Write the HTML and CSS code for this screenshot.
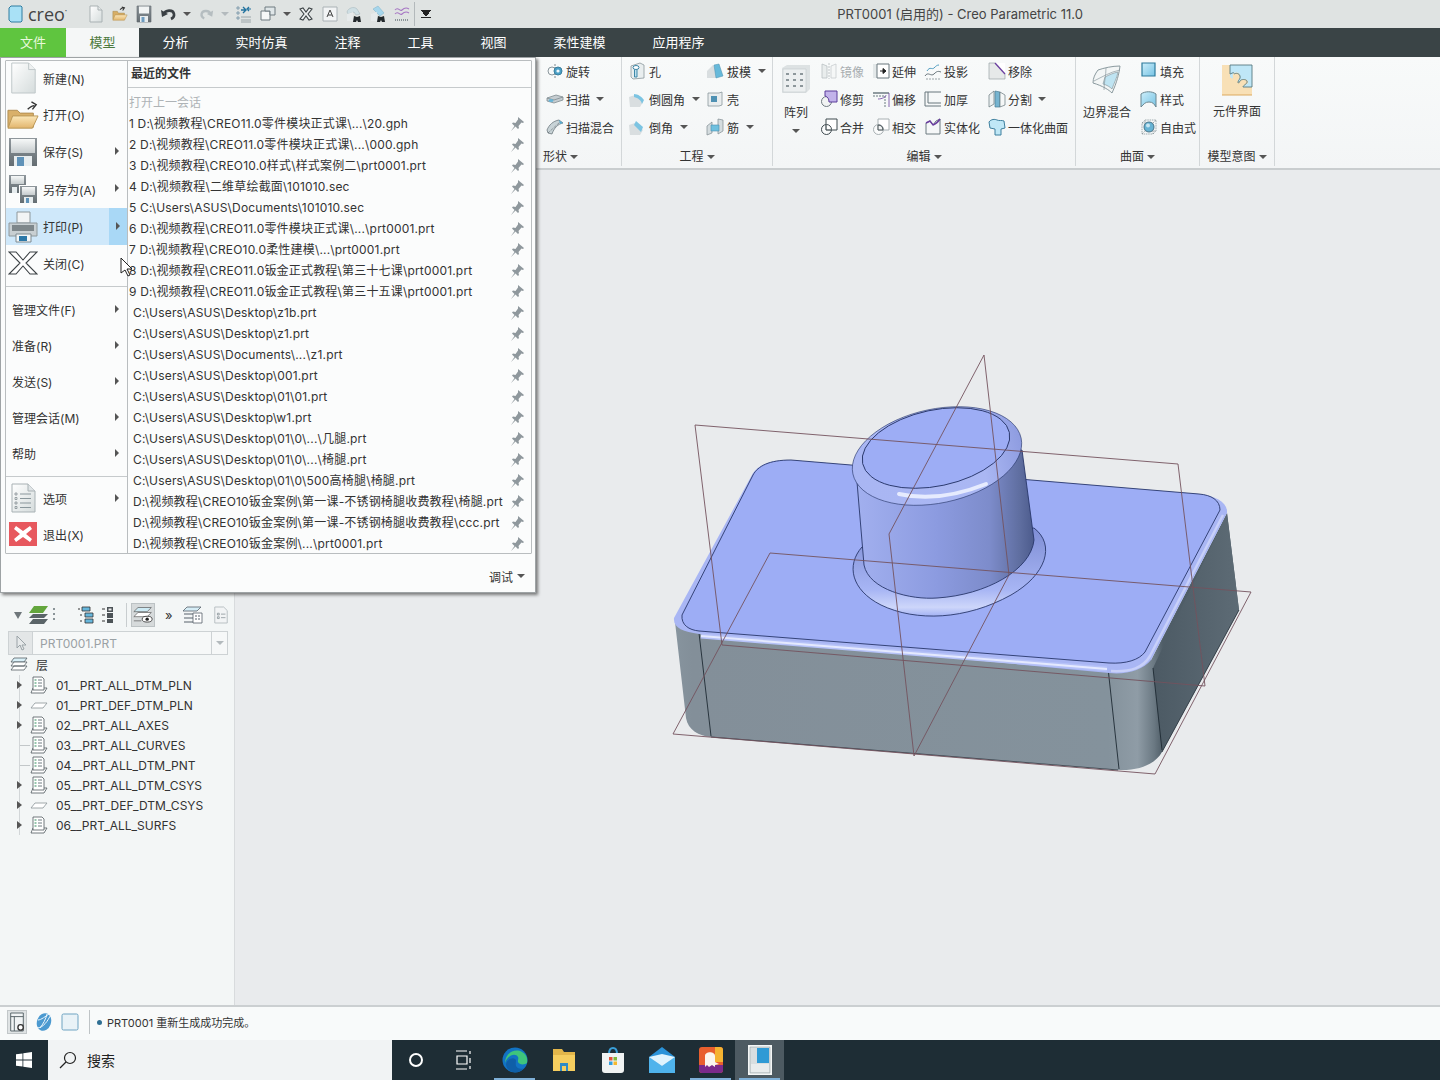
FILE: index.html
```html
<!DOCTYPE html>
<html lang="zh-CN">
<head>
<meta charset="utf-8">
<title>PRT0001 - Creo Parametric 11.0</title>
<link rel="stylesheet" href="styles.css">
</head>
<body>
<svg class="defs" aria-hidden="true">
  <defs>
    <linearGradient id="g-page" x1="0" y1="0" x2="1" y2="1"><stop offset="0" stop-color="#fff"/><stop offset="1" stop-color="#d5dcdc"/></linearGradient>
    <linearGradient id="g-folder" x1="0" y1="0" x2="0" y2="1"><stop offset="0" stop-color="#fbe7b8"/><stop offset="1" stop-color="#e2b56d"/></linearGradient>
    <linearGradient id="g-disk" x1="0" y1="0" x2="0" y2="1"><stop offset="0" stop-color="#8f979c"/><stop offset="1" stop-color="#646d72"/></linearGradient>
    <linearGradient id="g-blue" x1="0" y1="0" x2="1" y2="1"><stop offset="0" stop-color="#cdeefa"/><stop offset="1" stop-color="#76c3e4"/></linearGradient>
    <linearGradient id="g-front" x1="0" y1="0" x2="1" y2="0"><stop offset="0" stop-color="#87949e"/><stop offset=".03" stop-color="#838f99"/><stop offset=".768" stop-color="#84929c"/><stop offset=".82" stop-color="#8f9ca6"/><stop offset=".85" stop-color="#6a7882"/><stop offset=".865" stop-color="#4f5d67"/><stop offset="1" stop-color="#505e68"/></linearGradient>
    <linearGradient id="g-side" x1="0" y1="0" x2="1" y2="0"><stop offset="0" stop-color="#4c5a64"/><stop offset="1" stop-color="#5d6b75"/></linearGradient>
    <linearGradient id="g-cyl" x1="0" y1="0" x2="1" y2="0"><stop offset="0" stop-color="#a2b0ef"/><stop offset=".45" stop-color="#8c9be0"/><stop offset=".75" stop-color="#7d8ccb"/><stop offset=".92" stop-color="#5f6ea0"/><stop offset="1" stop-color="#4c5b8c"/></linearGradient>
    <linearGradient id="g-cap" x1="0" y1="0" x2="1" y2="0"><stop offset="0" stop-color="#a9b6f3"/><stop offset=".75" stop-color="#aab7f3"/><stop offset="1" stop-color="#8e9ce0"/></linearGradient>
    <linearGradient id="g-base" x1="0" y1="0" x2="0" y2="1"><stop offset="0" stop-color="#7e8dd4"/><stop offset=".7" stop-color="#a7b5f4"/><stop offset=".9" stop-color="#cdd6fa"/><stop offset="1" stop-color="#a3b2f4"/></linearGradient>
    <linearGradient id="g-panel" x1="0" y1="0" x2="0" y2="1"><stop offset="0" stop-color="#f6f8f8"/><stop offset="1" stop-color="#c6ccce"/></linearGradient>

    <symbol id="i-new" viewBox="0 0 16 18"><path d="M2 1h8l4 4v12H2z" fill="url(#g-page)" stroke="#a9b1b3"/><path d="M10 1v4h4" fill="#e6eaea" stroke="#a9b1b3"/></symbol>
    <symbol id="i-open" viewBox="0 0 18 18"><path d="M1 6h5l1 2h7v7H1z" fill="#d7ae66" stroke="#a98b52" stroke-width=".6"/><path d="M3.500 10H17l-3 6H1z" fill="url(#g-folder)" stroke="#b99655" stroke-width=".6"/><path d="M9 4c2-2 3-2 4-2M11 1l3 1-2 3" fill="none" stroke="#333" stroke-width="1.200"/></symbol>
    <symbol id="i-save" viewBox="0 0 16 18"><path d="M1 1h14v16H1z" fill="url(#g-disk)" stroke="#5e676c" stroke-width=".6"/><path d="M3 1.500h10v7H3z" fill="#f1f4f4"/><path d="M4 11h8v6H4z" fill="#e8edef"/><path d="M5.500 12h3v5h-3z" fill="#6d9cc0"/></symbol>
    <symbol id="i-undo" viewBox="0 0 18 16"><path d="M4 8c1-4 9-5 10 0 .6 3-1 4-3 5" fill="none" stroke="#3a4044" stroke-width="2.600"/><path d="M1 4l1 7 6-3z" fill="#3a4044"/></symbol>
    <symbol id="i-redo" viewBox="0 0 18 16"><path d="M14 8c-1-4-9-5-10 0-.6 3 1 4 3 5" fill="none" stroke="#b5bdc0" stroke-width="2.600"/><path d="M17 4l-1 7-6-3z" fill="#b5bdc0"/></symbol>
    <symbol id="i-regen" viewBox="0 0 16 18"><path d="M1 2h2v2H1zM1 7h2v2H1zM1 12h2v2H1z" fill="none" stroke="#6f8fa5" stroke-width=".8"/><path d="M5 15h10M5 17h10M5 12h10" stroke="#8c979c" stroke-width=".8"/><path d="M5 5h5M7 2l3 3-3 3" fill="none" stroke="#23739f" stroke-width="1.400"/><path d="M15 4h-3M13 2l-2 2 2 2" fill="none" stroke="#23739f" stroke-width="1.200"/></symbol>
    <symbol id="i-win" viewBox="0 0 16 16"><path d="M1 5h9v9H1z" fill="#f6f8f8" stroke="#6f7b80"/><path d="M5 1h10v8h-5V5H5z" fill="#dfe6e8" stroke="#6f7b80"/></symbol>
    <symbol id="i-x" viewBox="0 0 16 16"><path d="M2 3l3-1 3 4 3-4 3 1-4 5 4 5-3 1-3-4-3 4-3-1 4-5z" fill="#eef1f1" stroke="#3c4346" stroke-width="1.100"/></symbol>
    <symbol id="i-a" viewBox="0 0 16 16"><path d="M1 1h14v14H1z" fill="#f2f4f5" stroke="#aab2b6"/><path d="M5 11l3-7 3 7M6 9h4" fill="none" stroke="#444" stroke-width="1"/></symbol>
    <symbol id="i-tool1" viewBox="0 0 16 18"><path d="M1 7C2 3 8 1 11 4l3 5-4 1-2-3-6 2z" fill="#cfdfe4" stroke="#9fb0b6" stroke-width=".5"/><path d="M1 9l6-2v9H1z" fill="#e6eaeb"/><path d="M8 11l3 1 3-1 1 6h-3l-1-2-1 2H7z" fill="#22282b"/></symbol>
    <symbol id="i-tool2" viewBox="0 0 16 18"><path d="M3 4l5-3 6 7-4 3z" fill="#a6d6ec" stroke="#7fb3c9" stroke-width=".5"/><path d="M1 9l6-2v9H1z" fill="#e6eaeb"/><path d="M8 11l3 1 3-1 1 6h-3l-1-2-1 2H7z" fill="#22282b"/></symbol>
    <symbol id="i-wave" viewBox="0 0 16 18"><path d="M1 5c3-4 5 2 7 0s4-3 7-1M1 9c3-4 5 2 7 0s4-3 7-1" fill="none" stroke="#a777c4" stroke-width="1.100"/><path d="M1 15h14" stroke="#8a9498" stroke-dasharray="1 1" stroke-width="2"/></symbol>

    <symbol id="r-revolve" viewBox="0 0 18 16"><path d="M9 1v14" stroke="#7e8a90" stroke-dasharray="2 1"/><ellipse cx="6" cy="8" rx="4" ry="4" fill="none" stroke="#8b979d"/><ellipse cx="12" cy="8" rx="4" ry="4" fill="#4a9fc6" stroke="#3b7f9e"/><circle cx="12" cy="8" r="1.600" fill="#eef7fb"/></symbol>
    <symbol id="r-sweep" viewBox="0 0 18 16"><path d="M1 7l9-3 7 2v3l-9 3-7-2z" fill="#c5ccd0" stroke="#7f8b90" stroke-width=".8"/><path d="M1 7l7 2 9-3" fill="none" stroke="#7f8b90" stroke-width=".8"/><ellipse cx="5" cy="9.500" rx="2.500" ry="1.500" fill="#68b4d6"/></symbol>
    <symbol id="r-sweepb" viewBox="0 0 18 16"><path d="M1 11C3 6 7 2 13 1l4 3c-5 1-9 5-11 11l-4-1z" fill="#c8d3d7" stroke="#6d797f" stroke-width=".8"/><path d="M13 1l4 3-3 1z" fill="#58acd0"/><path d="M2 14L14 3" stroke="#4a5257" stroke-dasharray="1 1" stroke-width=".7"/></symbol>
    <symbol id="r-hole" viewBox="0 0 18 18"><path d="M3 4l9-3 4 2v13l-11 1-2-2z" fill="#e9eeef" stroke="#8a979c" stroke-width=".8"/><path d="M6.500 6v9h2.500V5z" fill="#bfe0ee" stroke="#3c87a8"/><ellipse cx="8" cy="5.500" rx="3" ry="2" fill="#fff" stroke="#3c87a8"/></symbol>
    <symbol id="r-draft" viewBox="0 0 18 16"><path d="M1 15V8l6-6 3 3v10z" fill="#d9dee0"/><path d="M8 2l5-1 4 12-7 2z" fill="#66b9da" stroke="#4a8fae" stroke-width=".5"/></symbol>
    <symbol id="r-round" viewBox="0 0 18 18"><path d="M1 7l6-2c4 0 7 3 8 7l-3 5H2z" fill="#d9dee0"/><path d="M6 4c4 0 8 3 10 6l-2 4c-1-4-4-6-8-7z" fill="#7cc4e2"/></symbol>
    <symbol id="r-shell" viewBox="0 0 18 18"><path d="M2 3h11l3-1v13l-3 1H2z" fill="#e9edee" stroke="#8a979c" stroke-width=".8"/><path d="M5 6h6v6H5z" fill="#4f91b3"/></symbol>
    <symbol id="r-chamfer" viewBox="0 0 18 18"><path d="M1 7l6-2 8 7-3 5H2z" fill="#d9dee0"/><path d="M8 3l7 6-2 5-7-7z" fill="#7cc4e2"/></symbol>
    <symbol id="r-rib" viewBox="0 0 18 18"><path d="M1 8l5-4v11l-5 2z" fill="#d4dcdf" stroke="#7f8b90" stroke-width=".7"/><path d="M12 1l5 1v11l-5 3z" fill="#d4dcdf" stroke="#7f8b90" stroke-width=".7"/><path d="M5 7h8v6H5z" fill="#6fc0df" stroke="#4a8fae" stroke-width=".6"/></symbol>
    <symbol id="r-pattern" viewBox="0 0 30 30"><path d="M1 4l5-3h23v24l-4 4H1z" fill="#dde2e3"/><path d="M2 5h23v23H2z" fill="#eceff0" stroke="#c4cacc" stroke-width=".6"/><path d="M5 9h3v2H5zM12 9h3v2h-3zM19 9h3v2h-3zM5 15h3v2H5zM12 15h3v2h-3zM19 15h3v2h-3zM5 21h3v2H5zM12 21h3v2h-3zM19 21h3v2h-3z" fill="#8d979b"/></symbol>
    <symbol id="r-mirror" viewBox="0 0 18 18"><path d="M2 2l5 2v12H2z" fill="#e9eded" stroke="#b9c0c3" stroke-width=".8"/><path d="M16 2l-5 2v12h5z" fill="#f5f7f7" stroke="#c8cdcf" stroke-width=".8"/><path d="M9 1v16" stroke="#c0c6c8" stroke-dasharray="2 1"/></symbol>
    <symbol id="r-extend" viewBox="0 0 18 16"><path d="M1 1h4v14H1z" fill="#e3e8e9"/><path d="M5 1h12v14H5z" fill="#fff" stroke="#68767c"/><path d="M8 8h5M11 5.500l3 2.500-3 2.500z" stroke="#222" fill="#222"/></symbol>
    <symbol id="r-project" viewBox="0 0 18 18"><path d="M1 14c3-5 6 1 9-2s4-3 7-2" fill="none" stroke="#69757b"/><path d="M3 9c3-5 5-1 7-3s3-3 5-3" fill="none" stroke="#4e9cc0"/><path d="M2 17h14" stroke="#9aa4a8" stroke-dasharray="2 1"/></symbol>
    <symbol id="r-remove" viewBox="0 0 18 18"><path d="M1 1h6l10 11v5H1z" fill="#e6e9e9" stroke="#9aa3a7" stroke-width=".7"/><path d="M7 1h10v11z" fill="#fff"/><path d="M7 1l10 11" stroke="#6b3fa0" stroke-width="1.300"/></symbol>
    <symbol id="r-trim" viewBox="0 0 18 18"><circle cx="6.500" cy="11.500" r="5" fill="#f1f3f3" stroke="#6f7a80"/><path d="M5 1h12v11H9c0-3-1-5-4-6z" fill="#c2b3ea" stroke="#5b3d9a"/></symbol>
    <symbol id="r-offset" viewBox="0 0 18 18"><path d="M1 3h16" stroke="#8f9a9f" stroke-width="2"/><path d="M1 6h12v11" fill="none" stroke="#6b7a80" stroke-dasharray="2 1"/><path d="M6 9c4 0 8-2 8-4M17 3v14" fill="none" stroke="#6b3fa0" stroke-width=".8"/></symbol>
    <symbol id="r-thick" viewBox="0 0 18 16"><path d="M1 1h16M1 1v14h16M4 1v11h13" fill="none" stroke="#69767c"/></symbol>
    <symbol id="r-split" viewBox="0 0 18 18"><path d="M1 5l5-4v13l-5 3z" fill="#edf1f2" stroke="#65757b" stroke-width=".7"/><path d="M7 1l5 1v15H7z" fill="#76b4d0" stroke="#4b7d94" stroke-width=".7"/><path d="M12 2l5 3v10l-5 2z" fill="#f5f7f7" stroke="#65757b" stroke-width=".7"/></symbol>
    <symbol id="r-merge" viewBox="0 0 18 18"><path d="M6 1h11v11H6z" fill="#fff" stroke="#3f4a4f"/><circle cx="6.500" cy="11.500" r="5" fill="#fff" fill-opacity=".5" stroke="#3f4a4f"/><path d="M6 7v5h5" fill="none" stroke="#3f4a4f"/></symbol>
    <symbol id="r-intersect" viewBox="0 0 18 18"><path d="M6 1h11v11H6z" fill="#fff" stroke="#a8b0b3"/><circle cx="6.500" cy="11.500" r="5" fill="#fff" fill-opacity=".5" stroke="#a8b0b3"/><path d="M6 7c3 0 5 2 5 5H6z" fill="#f3f5f5" stroke="#3f4a4f"/></symbol>
    <symbol id="r-solidify" viewBox="0 0 18 18"><path d="M2 5l4-2 3 4 3-4 4-2v15H2z" fill="#f5f7f8" stroke="#6c7a80"/><path d="M2 5l4-2 3 4c3-1 5-3 7-6" fill="none" stroke="#6b3fa0" stroke-width="1.400"/></symbol>
    <symbol id="r-unify" viewBox="0 0 18 18"><path d="M1 4c2-3 6-3 8-2s5 0 7 1l1 7-4 1v6H7v-6l-5-1z" fill="#bfe7f6" stroke="#3d7f9e"/></symbol>
    <symbol id="r-bound" viewBox="0 0 32 32"><path d="M8 6c6-2 14-4 22-4-1 8-3 16-8 27-3-3-9-7-19-10 0-5 2-9 5-13z" fill="#f3f6f6" stroke="#8b9a9f"/><path d="M15 13c4-2 8-4 13-5-1 6-4 11-6 17-2-2-5-4-9-5z" fill="#bfe4f2" stroke="#8b9a9f" stroke-width=".7"/><path d="M4 17c8-4 16-9 26-11M16 4c0 8-2 14-2 22" fill="none" stroke="#8b9a9f" stroke-width=".7"/></symbol>
    <symbol id="r-fill" viewBox="0 0 18 18"><path d="M2 1h13v13H2z" fill="url(#g-blue)" stroke="#2e7b9c" stroke-width="1.200"/></symbol>
    <symbol id="r-style" viewBox="0 0 18 18"><path d="M1 4C5 1 12 1 16 4v13c-2-3-3-5-7-5s-5 2-8 5z" fill="url(#g-blue)" stroke="#6b8690"/></symbol>
    <symbol id="r-free" viewBox="0 0 18 18"><path d="M2 5h11v11H2zM5 2h11v11H5zM2 5l3-3M13 5l3-3M2 16l3-3M13 16l3-3" fill="none" stroke="#7d8a8f" stroke-width=".7" stroke-dasharray="1.500 .8"/><circle cx="9" cy="9" r="5" fill="#67b3d4" stroke="#47758a"/><circle cx="8" cy="7.500" r="2" fill="#c7e6f2"/></symbol>
    <symbol id="r-puzzle" viewBox="0 0 32 32"><path d="M1 1h30v30H1z" fill="#f8e0b6"/><path d="M9 1h22v22H22c1-3 5-2 5-5s-5-4-7-2-3 3-3 1 3-3 2-6-4-3-6-2-1 4-1 5-3 0-3-2z" fill="#bfe7f7"/><path d="M9 1v9c1 0 3-2 4-1M9 1h22v22h-9c0-2 5-3 4-6-1-2-6-2-7 0s-2 3-2 1 3-3 2-6-4-3-6-2" fill="none" stroke="#57797f" stroke-width=".9"/><path d="M1 31h30" stroke="#dca95f"/></symbol>

    <symbol id="m-new" viewBox="0 0 32 34"><path d="M4 1h18l7 7v25H4z" fill="url(#g-page)" stroke="#bcc4c6"/><path d="M22 1v7h7" fill="#eef1f1" stroke="#bcc4c6"/></symbol>
    <symbol id="m-open" viewBox="0 0 34 30"><path d="M1 10h10l3 3h14v15H1z" fill="#d9b06a" stroke="#b08d50"/><path d="M6 16h27l-6 13H1z" fill="url(#g-folder)" stroke="#b99655"/><path d="M22 9c3-3 5-4 7-4M26 1l5 3-4 5" fill="none" stroke="#333" stroke-width="1.500"/></symbol>
    <symbol id="m-save" viewBox="0 0 30 30"><path d="M1 1h28v28H1z" fill="url(#g-disk)"/><path d="M3 2h24v14H3z" fill="url(#g-panel)"/><path d="M6 19h18v10H6z" fill="#e7edef"/><path d="M9 20h7v9H9z" fill="#5f92b8"/></symbol>
    <symbol id="m-saveas" viewBox="0 0 30 30"><path d="M1 1h17v18H1z" fill="url(#g-disk)"/><path d="M3 2h13v8H3z" fill="url(#g-panel)"/><path d="M11 11h18v18H11z" fill="#fff"/><path d="M12 12h17v17H12z" fill="url(#g-disk)"/><path d="M14 13h13v8H14z" fill="url(#g-panel)"/><path d="M16 23h9v6h-9z" fill="#e7edef"/><path d="M18 24h3v5h-3z" fill="#5f92b8"/><path d="M4 13h5v6H4z" fill="#e7edef"/></symbol>
    <symbol id="m-print" viewBox="0 0 32 32"><path d="M10 1h13v11H10z" fill="#f2f4f5" stroke="#8e989c"/><path d="M2 12h28v13H2z" fill="#c8cfd2" stroke="#8e989c"/><path d="M5 14h22v6H5z" fill="#7e878b"/><path d="M9 23h15v8H9z" fill="#f2f6f8" stroke="#7e8a90"/><path d="M12 25h8v5h-8z" fill="#2c78a8"/></symbol>
    <symbol id="m-close" viewBox="0 0 30 28"><path d="M1 3h7l7 8 7-8h7L18 14l11 11h-7l-7-8-7 8H1l11-11z" fill="#fff" stroke="#3b4144" stroke-width="1.100"/></symbol>
    <symbol id="m-options" viewBox="0 0 28 30"><path d="M3 1h16l7 7v21H3z" fill="url(#g-page)" stroke="#a8b1b4"/><path d="M19 1v7h7" fill="#dfe4e6" stroke="#a8b1b4"/><path d="M11 11h11M11 15.500h11M11 20h11M11 24.500h11" stroke="#8a979c"/><path d="M6 10h2v2H6zM6 14.500h2v2H6zM6 19h2v2H6zM6 23.500h2v2H6z" fill="none" stroke="#687379" stroke-width=".6"/></symbol>
    <symbol id="m-exit" viewBox="0 0 28 26"><path d="M0 1h28v24H0z" fill="#e7585e"/><path d="M7 5l7 5 7-5 2 3-6 5 6 5-2 3-7-5-7 5-2-3 6-5-6-5z" fill="#fff"/></symbol>
    <symbol id="pin" viewBox="0 0 14 14"><path d="M8 0l6 5-1 1-1.500-.5L8.500 9l.5 2-1 1-2.500-2.500L1 14l3.500-5L2 6.500l1-1 2.500.5L8 2.500z" fill="#8f989d"/></symbol>

    <symbol id="t-layer" viewBox="0 0 18 18"><path d="M4 3h13l-3 4H1z" fill="#d9f0f8" stroke="#556066" stroke-width=".8"/><path d="M4 7h13l-3 4H1zM4 11h13l-3 4H1z" fill="#fff" stroke="#556066" stroke-width=".8"/></symbol>
    <symbol id="t-list" viewBox="0 0 18 18"><path d="M3 12l-2 5h13l3-5z" fill="#fff" stroke="#4e585d" stroke-width=".8"/><path d="M3 1h9l2 2v11H3z" fill="#fff" stroke="#4e585d" stroke-width=".8"/><path d="M4.500 4h2M4.500 7h2M4.500 10h2" stroke="#2e8e5c" stroke-width="1.200"/><path d="M8 4h4M8 7h4M8 10h4" stroke="#6e7c82"/></symbol>
    <symbol id="t-flat" viewBox="0 0 18 18"><path d="M5 7h12l-4 5H1z" fill="#fff" stroke="#8a9498" stroke-width=".8"/></symbol>
    <symbol id="t-green" viewBox="0 0 20 18"><path d="M6 0h14l-5 7H1z" fill="#63a63d"/><path d="M5 8h15l-4 4H1zM5 13h15l-4 5H1z" fill="#5a6468"/></symbol>
    <symbol id="t-tree" viewBox="0 0 18 18"><path d="M5 1h8v4H5zM8 7h8v4H8zM8 13h8v4H8z" fill="#67b7dc" stroke="#333" stroke-width=".8"/><path d="M1 3h2M3 9h2M3 15h2" stroke="#333"/></symbol>
    <symbol id="t-tree2" viewBox="0 0 18 18"><path d="M7 1h6v5H7zM7 7h6v5H7zM7 13h6v4H7z" fill="#4c5357"/><path d="M2 3h3M2 9h3M2 15h3" stroke="#333"/><path d="M8.500 2.500h3v2h-3z" fill="#eee"/></symbol>
    <symbol id="t-eye" viewBox="0 0 24 20"><path d="M6 1h16l-5 5H1z" fill="#cdeaf4" stroke="#555" stroke-width=".8"/><path d="M6 7h16l-5 5H1zM1 17h9" fill="#fff" stroke="#555" stroke-width=".8"/><ellipse cx="17" cy="15" rx="6" ry="3.500" fill="#fff" stroke="#333"/><circle cx="17" cy="15" r="2" fill="#222"/></symbol>
    <symbol id="t-table" viewBox="0 0 20 18"><path d="M4 1h14l-4 4H0z" fill="#d6edf6" stroke="#56616a" stroke-width=".8"/><path d="M1 8h9M1 12h9M1 16h9" stroke="#56616a"/><path d="M10 7h9v10h-9z" fill="#fff" stroke="#56616a" stroke-width=".8"/><path d="M12 10h5M12 13h5" stroke="#56616a" stroke-dasharray="2 1"/></symbol>
    <symbol id="t-doc" viewBox="0 0 18 20"><path d="M2 1h10l4 4v14H2z" fill="#f2f4f5" stroke="#b2babd"/><path d="M5 8h2v2H5zM5 12h2v2H5zM9 9h5M9 13h5" fill="none" stroke="#7d888e" stroke-width=".8"/></symbol>
    <symbol id="t-arrow" viewBox="0 0 14 16"><path d="M3 1v12l3-3 2 5 2-1-2-4h4z" fill="#e6e9ea" stroke="#9aa3a7"/></symbol>

    <symbol id="s-view" viewBox="0 0 20 24"><path d="M3 2h14v20H3z" fill="#f1f4f5" stroke="#4f5b61"/><path d="M3 6h14M7 6v16" stroke="#4f5b61"/><circle cx="14" cy="18" r="3" fill="#fff" stroke="#333" stroke-width="1.500"/></symbol>
    <symbol id="s-globe" viewBox="0 0 18 20"><ellipse cx="9" cy="10" rx="7" ry="9" transform="rotate(20 9 10)" fill="#4b99d0"/><path d="M3 8c3 0 8-4 11-6M5 16c3-4 6-9 7-14M16 2C13 9 8 16 2 16" fill="none" stroke="#eef7fc"/></symbol>
    <symbol id="s-win" viewBox="0 0 18 18"><rect x="1" y="1" width="16" height="16" rx="1.500" fill="#e9f2f7" stroke="#6ea3c2"/></symbol>

    <symbol id="b-win" viewBox="0 0 16 16"><path d="M0 2.300l6.500-.9v6.200H0zM7.300 1.300L16 0v7.600H7.300zM0 8.400h6.500v6.200L0 13.700zM7.300 8.400H16V16l-8.700-1.300z" fill="#fff"/></symbol>
    <symbol id="b-search" viewBox="0 0 18 18"><circle cx="11" cy="7" r="5.500" fill="none" stroke="#222" stroke-width="1.200"/><path d="M7 11l-6 6" stroke="#222" stroke-width="1.200"/></symbol>
    <symbol id="b-task" viewBox="0 0 16 20"><path d="M0 1h11M0 19h11M1 6h10v8H1zM14 1v3M14 8v5M14 16v3" fill="none" stroke="#fff" stroke-width="1.200"/></symbol>
    <symbol id="b-edge" viewBox="0 0 26 26"><circle cx="13" cy="13" r="12.500" fill="#1273c4"/><path d="M3 16C3 6 13 1 20 5c4 2 6 6 5 11-2 2-8 2-9-1-.6-2 1-3 0-5-2-4-10-3-13 6z" fill="#3fc47c"/><path d="M4 17c1-4 6-7 9-5 2 1 0 4 1 7 1 2 4 4 8 2-3 4-7 5-11 4-4-1-7-4-7-8z" fill="#0f5fa8"/></symbol>
    <symbol id="b-folder" viewBox="0 0 22 24"><path d="M0 1h9l2 3h11v19H0z" fill="#e3b64a"/><path d="M0 7h22v16H0z" fill="#f6ce5f"/><path d="M7 15h8v8h-2v-5H9v5H7z" fill="#2f8bc5"/></symbol>
    <symbol id="b-store" viewBox="0 0 22 26"><path d="M7 7c0-8 8-8 8 0" fill="none" stroke="#3a9fd8" stroke-width="2"/><path d="M0 6h22v17a3 3 0 0 1-3 3H3a3 3 0 0 1-3-3z" fill="#f0f3f3"/><path d="M7 10h3.500v3.500H7z" fill="#e2533a"/><path d="M11.500 10H15v3.500h-3.500z" fill="#7fbb3b"/><path d="M7 14.500h3.500V18H7z" fill="#2f9fe0"/><path d="M11.500 14.500H15V18h-3.500z" fill="#f5b92e"/></symbol>
    <symbol id="b-mail" viewBox="0 0 26 26"><path d="M0 10L13 0l13 10v16H0z" fill="#2a92d8"/><path d="M0 10l13 9 13-9v16H0z" fill="#4fb3ec"/><path d="M0 10l13 9 13-9-13-3z" fill="#dff3fd"/></symbol>
    <symbol id="b-app" viewBox="0 0 24 26"><rect width="24" height="26" rx="3" fill="#e85f2e"/><path d="M0 18h24v5a3 3 0 0 1-3 3H3a3 3 0 0 1-3-3z" fill="#7b2a8a"/><path d="M16 0h5a3 3 0 0 1 3 3v12h-8z" fill="#f5b331"/><path d="M6 20V9c0-5 10-5 10 0v6l4 2-4 1v2l-3-2-3 2-2-2z" fill="#fbf6ee"/></symbol>
    <symbol id="b-creo" viewBox="0 0 24 30"><path d="M0 0h24v30H0z" fill="#f4f6f6"/><path d="M2 2h20v26H2z" fill="#d9dee0" stroke="#8b9599" stroke-width=".5"/><path d="M9 3h12v15H9z" fill="#2f9ad5"/><path d="M3 19h18v8H3z" fill="#e9eced"/></symbol>
  </defs>
</svg>

<header class="titlebar">
  <div class="qa-left">
    <div class="logo">
      <svg class="logo-box" width="15" height="18" viewBox="0 0 15 18"><path d="M3 1h10l1 1v14l-1 1H3l-2-2V3z" fill="#a9e1f6" stroke="#2f7ca0"/></svg>
      <span class="logo-text">creo<sup class="logo-mark">•</sup></span>
    </div>
    <svg width="16" height="18"><use href="#i-new"/></svg>
    <svg width="16" height="18"><use href="#i-open"/></svg>
    <svg width="16" height="18"><use href="#i-save"/></svg>
    <svg width="18" height="16" class="squeeze"><use href="#i-undo"/></svg>
    <i class="tri tri-dark"></i>
    <svg width="16" height="16"><use href="#i-redo"/></svg>
    <i class="tri tri-light"></i>
    <svg width="16" height="18"><use href="#i-regen"/></svg>
    <svg width="16" height="16"><use href="#i-win"/></svg>
    <i class="tri tri-dark"></i>
    <svg width="16" height="16"><use href="#i-x"/></svg>
    <svg width="16" height="16"><use href="#i-a"/></svg>
    <svg width="16" height="18"><use href="#i-tool1"/></svg>
    <svg width="16" height="18"><use href="#i-tool2"/></svg>
    <svg width="16" height="18"><use href="#i-wave"/></svg>
    <span class="qa-sep"></span>
    <span class="qa-more"></span>
  </div>
  <div class="title">PRT0001 (启用的) - Creo Parametric 11.0</div>
</header>

<nav class="tabs">
  <div class="tab tab-file">文件</div>
  <div class="tab tab-active">模型</div>
  <div class="tab">分析</div>
  <div class="tab">实时仿真</div>
  <div class="tab">注释</div>
  <div class="tab">工具</div>
  <div class="tab">视图</div>
  <div class="tab">柔性建模</div>
  <div class="tab">应用程序</div>
</nav>

<section class="ribbon">
  <div class="group g-shape">
    <div class="group-body">
      <div class="col">
        <div class="item"><svg width="18" height="16"><use href="#r-revolve"/></svg>旋转</div>
        <div class="item"><svg width="18" height="16"><use href="#r-sweep"/></svg>扫描<i class="caret caret-m"></i></div>
        <div class="item"><svg width="18" height="16"><use href="#r-sweepb"/></svg>扫描混合</div>
      </div>
    </div>
    <div class="group-label label-left">形状<i class="caret"></i></div>
  </div>
  <div class="group g-eng">
    <div class="group-body">
      <div class="col col-78">
        <div class="item"><svg width="18" height="18"><use href="#r-hole"/></svg>孔</div>
        <div class="item"><svg width="18" height="18"><use href="#r-round"/></svg>倒圆角<i class="caret caret-m"></i></div>
        <div class="item"><svg width="18" height="18"><use href="#r-chamfer"/></svg>倒角<i class="caret caret-m"></i></div>
      </div>
      <div class="col">
        <div class="item"><svg width="18" height="16"><use href="#r-draft"/></svg>拔模<i class="caret caret-m"></i></div>
        <div class="item"><svg width="18" height="18"><use href="#r-shell"/></svg>壳</div>
        <div class="item"><svg width="18" height="18"><use href="#r-rib"/></svg>筋<i class="caret caret-m"></i></div>
      </div>
    </div>
    <div class="group-label">工程<i class="caret"></i></div>
  </div>
  <div class="group g-edit">
    <div class="group-body">
      <div class="big big-39">
        <svg width="30" height="30"><use href="#r-pattern"/></svg>
        <span class="big-text">阵列</span>
        <i class="caret caret-big"></i>
      </div>
      <div class="col col-52">
        <div class="item item-dim"><svg width="18" height="18"><use href="#r-mirror"/></svg>镜像</div>
        <div class="item"><svg width="18" height="18"><use href="#r-trim"/></svg>修剪</div>
        <div class="item"><svg width="18" height="18"><use href="#r-merge"/></svg>合并</div>
      </div>
      <div class="col col-52">
        <div class="item"><svg width="18" height="16"><use href="#r-extend"/></svg>延伸</div>
        <div class="item"><svg width="18" height="18"><use href="#r-offset"/></svg>偏移</div>
        <div class="item"><svg width="18" height="18"><use href="#r-intersect"/></svg>相交</div>
      </div>
      <div class="col col-64">
        <div class="item"><svg width="18" height="18"><use href="#r-project"/></svg>投影</div>
        <div class="item"><svg width="18" height="16"><use href="#r-thick"/></svg>加厚</div>
        <div class="item"><svg width="18" height="18"><use href="#r-solidify"/></svg>实体化</div>
      </div>
      <div class="col">
        <div class="item"><svg width="18" height="18"><use href="#r-remove"/></svg>移除</div>
        <div class="item"><svg width="18" height="18"><use href="#r-split"/></svg>分割<i class="caret caret-m"></i></div>
        <div class="item"><svg width="18" height="18"><use href="#r-unify"/></svg>一体化曲面</div>
      </div>
    </div>
    <div class="group-label">编辑<i class="caret"></i></div>
  </div>
  <div class="group g-surf">
    <div class="group-body">
      <div class="big big-58">
        <svg width="32" height="32"><use href="#r-bound"/></svg>
        <span class="big-text">边界混合</span>
      </div>
      <div class="col">
        <div class="item"><svg width="18" height="18"><use href="#r-fill"/></svg>填充</div>
        <div class="item"><svg width="18" height="18"><use href="#r-style"/></svg>样式</div>
        <div class="item"><svg width="18" height="18"><use href="#r-free"/></svg>自由式</div>
      </div>
    </div>
    <div class="group-label">曲面<i class="caret"></i></div>
  </div>
  <div class="group g-intent">
    <div class="group-body">
      <div class="big big-fill">
        <svg width="32" height="32"><use href="#r-puzzle"/></svg>
        <span class="big-text">元件界面</span>
      </div>
    </div>
    <div class="group-label">模型意图<i class="caret"></i></div>
  </div>
</section>

<main class="work">
  <aside class="panel">
    <div class="panel-tools">
      <i class="panel-tri"></i>
      <svg width="20" height="18"><use href="#t-green"/></svg>
      <span class="dots"></span>
      <svg class="t-a" width="18" height="18"><use href="#t-tree"/></svg>
      <svg class="t-b" width="18" height="18"><use href="#t-tree2"/></svg>
      <span class="panel-sep"></span>
      <span class="toggle"><svg width="20" height="18"><use href="#t-eye"/></svg></span>
      <span class="more">»</span>
      <svg class="t-c" width="20" height="18"><use href="#t-table"/></svg>
      <svg class="t-d" width="16" height="18"><use href="#t-doc"/></svg>
    </div>
    <div class="selector">
      <span class="sel-arrow"><svg width="14" height="16"><use href="#t-arrow"/></svg></span>
      <span class="sel-text">PRT0001.PRT</span>
      <span class="sel-drop"><i class="tri tri-light"></i></span>
    </div>
    <div class="tree-head"><svg width="18" height="18"><use href="#t-layer"/></svg>层</div>
    <ul class="tree">
      <li class="node"><i class="exp"></i><svg width="18" height="18"><use href="#t-list"/></svg>01__PRT_ALL_DTM_PLN</li>
      <li class="node"><i class="exp"></i><svg width="18" height="18"><use href="#t-flat"/></svg>01__PRT_DEF_DTM_PLN</li>
      <li class="node"><i class="exp"></i><svg width="18" height="18"><use href="#t-list"/></svg>02__PRT_ALL_AXES</li>
      <li class="node"><i class="dash"></i><svg width="18" height="18"><use href="#t-list"/></svg>03__PRT_ALL_CURVES</li>
      <li class="node"><i class="dash"></i><svg width="18" height="18"><use href="#t-list"/></svg>04__PRT_ALL_DTM_PNT</li>
      <li class="node"><i class="exp"></i><svg width="18" height="18"><use href="#t-list"/></svg>05__PRT_ALL_DTM_CSYS</li>
      <li class="node"><i class="exp"></i><svg width="18" height="18"><use href="#t-flat"/></svg>05__PRT_DEF_DTM_CSYS</li>
      <li class="node"><i class="exp"></i><svg width="18" height="18"><use href="#t-list"/></svg>06__PRT_ALL_SURFS</li>
    </ul>
  </aside>
  <div class="viewport">
    <svg class="model" width="1206" height="835" viewBox="234 170 1206 835">
      <path d="M674 622 L685 718 C687 730 698 736 710 737 L1117 770 C1140 771 1155 763 1161 752 L1238 610 L1226 513 L1150 660 Z" fill="url(#g-front)"/>
      <path d="M1226 513 L1238 610 L1161 752 L1152 668 Z" fill="url(#g-side)"/>
      <path d="M698 633 L710 736 M1107 668 L1118 769 M1152 668 L1161 750" stroke="#1e2a33" stroke-width=".9" fill="none"/>
      <path d="M710 737 L1117 770 M1161 752 L1238 610" stroke="#2a343c" stroke-width=".8" fill="none"/>
      <path d="M673 618 L752 473 C757 466 768 459 790 460 L1198 494 C1216 496 1227 503 1226 513 L1150 660 C1142 670 1125 675 1108 673 L698 634 C682 632 672 628 673 618 Z" fill="#a9b6f4"/>
      <path d="M700 636 L1106 669" stroke="#b6c2f8" stroke-width="5"/>
      <path d="M700 636 L1106 669" stroke="#e4e9fe" stroke-width="2"/>
      <path d="M1110 671 C1130 672 1142 668 1149 656 L1222 515" stroke="#c8d0f9" stroke-width="2.500" fill="none"/>
      <path d="M681 615 L752 475 C757 466 768 460 790 460 L1198 494 C1210 495 1219 500 1219 510 L1144 652 C1138 660 1125 664 1108 663 L698 631 C688 630 680 625 681 615 Z" fill="#9dadf5" stroke="#28376a" stroke-width=".9"/>
      <path d="M861 547 C845 565 850 590 880 605 C915 622 965 620 1010 595 C1045 575 1055 545 1033 528 Z" fill="url(#g-base)" stroke="#28376a" stroke-width=".9"/>
      <path d="M855 470 L863 565 C868 590 910 600 936 598 C985 595 1030 570 1033 540 L1021 450 Z" fill="url(#g-cyl)" stroke="#28376a" stroke-width=".9"/>
      <ellipse cx="936" cy="456" rx="86" ry="47" transform="rotate(-12 936 456)" fill="url(#g-cap)" stroke="#28376a" stroke-width=".6"/>
      <path d="M898 494 C925 500 955 496 985 484" stroke="#e6ebfe" stroke-width="4" fill="none" stroke-linecap="round"/>
      <ellipse cx="935" cy="448" rx="75" ry="38" transform="rotate(-12 935 448)" fill="#9dadf5" stroke="#28376a" stroke-width=".9"/>
      <g fill="none" stroke="#74525e" stroke-width=".9">
        <path d="M694 425 L1177 464 L1204 686 L721 645 Z"/>
        <path d="M769 553 L1250 592 L1154 774 L672 734 Z"/>
        <path d="M983 355 L888 534 L913 756 L1008 575 Z"/>
      </g>
    </svg>
  </div>
</main>

<footer class="status">
  <span class="status-on"><svg width="18" height="22"><use href="#s-view"/></svg></span>
  <svg width="18" height="20"><use href="#s-globe"/></svg>
  <svg width="18" height="18"><use href="#s-win"/></svg>
  <span class="status-sep"></span>
  <span class="bullet"></span>
  <span class="status-text">PRT0001 重新生成成功完成。</span>
</footer>

<div class="taskbar">
  <div class="start"><svg width="16" height="16"><use href="#b-win"/></svg></div>
  <div class="search"><svg width="18" height="18"><use href="#b-search"/></svg><span>搜索</span></div>
  <div class="task task-cortana"><span class="ring"></span></div>
  <div class="task task-view"><svg width="16" height="20"><use href="#b-task"/></svg></div>
  <div class="task task-run"><svg width="26" height="26"><use href="#b-edge"/></svg></div>
  <div class="task"><svg width="22" height="24"><use href="#b-folder"/></svg></div>
  <div class="task"><svg width="22" height="26"><use href="#b-store"/></svg></div>
  <div class="task"><svg width="26" height="26"><use href="#b-mail"/></svg></div>
  <div class="task task-run"><svg width="24" height="26"><use href="#b-app"/></svg></div>
  <div class="task task-run task-on"><svg width="24" height="30"><use href="#b-creo"/></svg></div>
</div>

<div class="filemenu">
  <div class="fm-box">
    <div class="fm-left">
      <div class="fm-big fm-first"><span class="fm-ic"><svg width="30" height="32"><use href="#m-new"/></svg></span>新建(N)</div>
      <div class="fm-big"><span class="fm-ic"><svg width="32" height="30"><use href="#m-open"/></svg></span>打开(O)</div>
      <div class="fm-big"><span class="fm-ic"><svg width="30" height="30"><use href="#m-save"/></svg></span>保存(S)<i class="fm-arrow"></i></div>
      <div class="fm-big fm-fourth"><span class="fm-ic"><svg width="30" height="30"><use href="#m-saveas"/></svg></span>另存为(A)<i class="fm-arrow"></i></div>
      <div class="fm-big fm-hot"><span class="fm-ic"><svg width="32" height="32"><use href="#m-print"/></svg></span>打印(P)<span class="fm-hot-end"><i class="fm-arrow"></i></span></div>
      <div class="fm-big fm-last"><span class="fm-ic"><svg width="30" height="28"><use href="#m-close"/></svg></span>关闭(C)</div>
      <div class="fm-small fm-small-first">管理文件(F)<i class="fm-arrow"></i></div>
      <div class="fm-small">准备(R)<i class="fm-arrow"></i></div>
      <div class="fm-small">发送(S)<i class="fm-arrow"></i></div>
      <div class="fm-small">管理会话(M)<i class="fm-arrow"></i></div>
      <div class="fm-small fm-small-last">帮助<i class="fm-arrow"></i></div>
      <div class="fm-big fm-low fm-low-first"><span class="fm-ic"><svg width="28" height="30"><use href="#m-options"/></svg></span>选项<i class="fm-arrow"></i></div>
      <div class="fm-big fm-low"><span class="fm-ic"><svg width="28" height="26"><use href="#m-exit"/></svg></span>退出(X)</div>
    </div>
    <div class="fm-right">
      <div class="fm-head">最近的文件</div>
      <div class="fm-session">打开上一会话</div>
      <ul class="recent">
        <li>1 D:\视频教程\CREO11.0零件模块正式课\...\20.gph<svg width="14" height="14"><use href="#pin"/></svg></li>
        <li>2 D:\视频教程\CREO11.0零件模块正式课\...\000.gph<svg width="14" height="14"><use href="#pin"/></svg></li>
        <li>3 D:\视频教程\CREO10.0样式\样式案例二\prt0001.prt<svg width="14" height="14"><use href="#pin"/></svg></li>
        <li>4 D:\视频教程\二维草绘截面\101010.sec<svg width="14" height="14"><use href="#pin"/></svg></li>
        <li>5 C:\Users\ASUS\Documents\101010.sec<svg width="14" height="14"><use href="#pin"/></svg></li>
        <li>6 D:\视频教程\CREO11.0零件模块正式课\...\prt0001.prt<svg width="14" height="14"><use href="#pin"/></svg></li>
        <li>7 D:\视频教程\CREO10.0柔性建模\...\prt0001.prt<svg width="14" height="14"><use href="#pin"/></svg></li>
        <li>8 D:\视频教程\CREO11.0钣金正式教程\第三十七课\prt0001.prt<svg width="14" height="14"><use href="#pin"/></svg></li>
        <li>9 D:\视频教程\CREO11.0钣金正式教程\第三十五课\prt0001.prt<svg width="14" height="14"><use href="#pin"/></svg></li>
        <li class="un">C:\Users\ASUS\Desktop\z1b.prt<svg width="14" height="14"><use href="#pin"/></svg></li>
        <li class="un">C:\Users\ASUS\Desktop\z1.prt<svg width="14" height="14"><use href="#pin"/></svg></li>
        <li class="un">C:\Users\ASUS\Documents\...\z1.prt<svg width="14" height="14"><use href="#pin"/></svg></li>
        <li class="un">C:\Users\ASUS\Desktop\001.prt<svg width="14" height="14"><use href="#pin"/></svg></li>
        <li class="un">C:\Users\ASUS\Desktop\01\01.prt<svg width="14" height="14"><use href="#pin"/></svg></li>
        <li class="un">C:\Users\ASUS\Desktop\w1.prt<svg width="14" height="14"><use href="#pin"/></svg></li>
        <li class="un">C:\Users\ASUS\Desktop\01\0\...\几腿.prt<svg width="14" height="14"><use href="#pin"/></svg></li>
        <li class="un">C:\Users\ASUS\Desktop\01\0\...\椅腿.prt<svg width="14" height="14"><use href="#pin"/></svg></li>
        <li class="un">C:\Users\ASUS\Desktop\01\0\500高椅腿\椅腿.prt<svg width="14" height="14"><use href="#pin"/></svg></li>
        <li class="un">D:\视频教程\CREO10钣金案例\第一课-不锈钢椅腿收费教程\椅腿.prt<svg width="14" height="14"><use href="#pin"/></svg></li>
        <li class="un">D:\视频教程\CREO10钣金案例\第一课-不锈钢椅腿收费教程\ccc.prt<svg width="14" height="14"><use href="#pin"/></svg></li>
        <li class="un">D:\视频教程\CREO10钣金案例\...\prt0001.prt<svg width="14" height="14"><use href="#pin"/></svg></li>
      </ul>
    </div>
  </div>
  <div class="fm-foot">调试<i class="caret"></i></div>
</div>

<svg class="cursor" width="15" height="20" viewBox="0 0 15 20"><path d="M1 1v15l4-3 3 6 2-1-3-6h5z" fill="#fff" stroke="#222"/></svg>
</body>
</html>
```
FILE: styles.css
```css
* { box-sizing: border-box; }
html, body { margin: 0; padding: 0; }
body {
  width: 1440px;
  height: 1080px;
  overflow: hidden;
  position: relative;
  display: flex;
  flex-direction: column;
  font-family: "Inter", "Noto Sans CJK SC", sans-serif;
  font-size: 12px;
  color: #333;
  background: #e9ebed;
}
svg { display: block; flex: none; }
.defs { width: 0; height: 0; }
ul { list-style: none; margin: 0; padding: 0; }
i { display: block; flex: none; }

/* title bar */
.titlebar {
  height: 28px;
  flex: none;
  display: flex;
  align-items: center;
  background: #dfe3e2;
}
.qa-left { width: 480px; flex: none; display: flex; align-items: center; gap: 8px; }
.logo { width: 80px; flex: none; display: flex; align-items: center; gap: 5px; padding-left: 8px; }
.logo-text { font-family: "Open Sans", sans-serif; font-size: 18px; line-height: 18px; color: #444; }
.logo-mark { font-size: 5px; vertical-align: 8px; line-height: 0; }
.squeeze { margin-right: -2px; }
.tri { width: 0; height: 0; border-left: 4px solid transparent; border-right: 4px solid transparent; margin: 0 -1px; }
.tri-dark { border-top: 4px solid #555; }
.tri-light { border-top: 4px solid #b3babd; }
.qa-sep { width: 1px; height: 24px; background: #b3b9bb; margin-left: -4px; }
.qa-more { width: 10px; height: 8px; border-top: 1px solid #222; margin-left: -2px; background: linear-gradient(to bottom right, transparent 49%, #222 50%) left / 50% 100% no-repeat, linear-gradient(to bottom left, transparent 49%, #222 50%) right / 50% 100% no-repeat; transform: scaleY(-1); }
.title { flex: 1; text-align: center; font-size: 13px; line-height: 28px; height: 28px; color: #444; }

/* tabs */
.tabs { height: 29px; flex: none; display: flex; background: #3a4446; }
.tab { padding: 0 23.5px; line-height: 29px; font-size: 13px; color: #fff; }
.tab-file { width: 66px; padding: 0; text-align: center; background: #5fc53f; color: #e8f9dc; }
.tab-active { background: #f5f7f7; color: #4d7a3e; }

/* ribbon */
.ribbon {
  height: 113px;
  flex: none;
  display: flex;
  padding-left: 536px;
  background: linear-gradient(#f8fafa, #f3f5f6);
  border-bottom: 2px solid #c9cdcf;
}
.group { display: flex; flex-direction: column; height: 109px; border-right: 1px solid #d3d7d9; flex: none; }
.g-shape { width: 86px; padding-left: 10px; }
.g-eng { width: 151px; padding-left: 6px; }
.g-edit { width: 303px; padding-left: 8px; }
.g-surf { width: 124px; padding-left: 6px; }
.g-intent { width: 75px; }
.group-body { flex: 1; display: flex; }
.col { display: grid; grid-template-rows: repeat(3, 28px); align-content: start; flex: none; }
.col-78 { width: 78px; }
.col-52 { width: 52px; }
.col-64 { width: 64px; }
.item { display: flex; align-items: center; gap: 2px; white-space: nowrap; }
.g-eng .item { gap: 3px; }
.item-dim { color: #a8adb0; }
.caret { width: 0; height: 0; border-left: 4px solid transparent; border-right: 4px solid transparent; border-top: 4px solid #555; margin-left: 3px; }
.caret-m { margin-left: 4px; }
.caret-big { margin: 8px 0 0; }
.big { display: flex; flex-direction: column; align-items: center; flex: none; padding-top: 7px; }
.big-39 { width: 39px; align-items: flex-start; }
.big-39 .big-text { margin-left: 3px; margin-top: 11px; }
.big-39 .caret-big { margin-left: 11px; }
.big-58 { width: 58px; align-items: flex-start; }
.big-58 svg { margin-left: 8px; }
.big-58 .big-text { margin-top: 9px; margin-left: 1px; }
.big-fill { width: 100%; }
.big-fill .big-text { margin-top: 8px; }
.big-text { margin-top: 10px; white-space: nowrap; line-height: 16px; }
.group-label { height: 16px; margin: 0 0 1px; display: flex; align-items: center; justify-content: center; line-height: 16px; white-space: nowrap; }
.label-left { justify-content: flex-start; margin-left: -3px; }
.g-eng .group-label { margin-left: -6px; }
.g-edit .group-label { margin-left: -8px; }
.g-surf .group-label { margin-left: -6px; }

/* main */
.work { flex: 1; display: flex; min-height: 0; }
.panel { width: 235px; flex: none; padding-top: 433px; background: #f3f6f6; border-right: 1px solid #d8dbdd; }
.panel-tools { height: 24px; display: flex; align-items: center; padding-left: 14px; }
.panel-tri { width: 0; height: 0; border-left: 4.5px solid transparent; border-right: 4.5px solid transparent; border-top: 7px solid #6f777b; margin-right: 6px; }
.dots { width: 2px; height: 14px; margin: 0 0 0 5px; background: repeating-linear-gradient(#8a9498 0 2px, transparent 2px 5px); }
.t-a { margin-left: 22px; }
.t-b { margin-left: 5px; }
.panel-sep { width: 1px; height: 24px; background: #c8cdcf; margin-left: 8px; }
.toggle { width: 24px; height: 24px; margin-left: 4px; display: flex; align-items: center; justify-content: center; background: #d6dadb; border: 1px solid #bcc2c4; }
.more { margin-left: 10px; font-size: 13px; line-height: 16px; color: #333; }
.t-c { margin-left: 10px; }
.t-d { margin-left: 10px; }
.selector { height: 24px; margin: 4px 6px 0 8px; display: flex; align-items: center; background: #f6f8f8; border: 1px solid #cdd2d4; }
.sel-arrow { width: 24px; height: 22px; display: flex; align-items: center; justify-content: center; background: #e3e6e7; border-right: 1px solid #cdd2d4; }
.sel-text { flex: 1; padding-left: 7px; color: #9aa1a5; }
.sel-drop { width: 16px; height: 22px; display: flex; align-items: center; justify-content: center; border-left: 1px solid #cdd2d4; }
.tree-head { height: 20px; padding: 0 0 2px 10px; display: flex; align-items: center; gap: 8px; }
.tree { background: linear-gradient(#d2d6d8, #d2d6d8) 19px 0 / 1px 100% no-repeat; }
.node { height: 20px; display: flex; align-items: center; position: relative; padding-left: 16px; white-space: nowrap; }
.node svg { margin: 0 8px 0 14px; }
.exp { position: absolute; left: 17px; top: 6px; width: 0; height: 0; border-top: 4px solid transparent; border-bottom: 4px solid transparent; border-left: 5px solid #555; }
.dash { position: absolute; left: 20px; top: 10px; width: 10px; height: 1px; background: #c2c7c9; }

.viewport { flex: 1; min-width: 0; background: #e9ebed; overflow: hidden; }

/* status */
.status { height: 35px; flex: none; display: flex; align-items: center; padding: 0 0 3px 7px; gap: 8px; background: #f8fafa; border-top: 2px solid #cbcfd1; }
.status-on { width: 20px; height: 24px; display: flex; align-items: center; justify-content: center; background: #dfe3e4; border: 1px solid #c2c7c9; }
.status-sep { width: 1px; height: 24px; background: #bfc4c6; margin-left: 2px; }
.bullet { width: 5px; height: 5px; border-radius: 50%; background: #2f6f93; margin-left: -1px; }
.status-text { font-size: 11px; color: #333; margin-left: -3px; }

/* taskbar */
.taskbar { height: 40px; flex: none; display: flex; background: #1e2d35; }
.start { width: 48px; display: flex; align-items: center; justify-content: center; }
.search { width: 344px; display: flex; align-items: center; gap: 10px; padding-left: 11px; background: #f1f3f4; font-size: 14px; color: #222; }
.task { width: 49px; display: flex; align-items: center; justify-content: center; position: relative; }
.task-cortana { width: 48px; }
.task-view { width: 50px; padding-right: 3px; }
.ring { width: 14px; height: 14px; border: 2px solid #fff; border-radius: 50%; }
.task-run::after { content: ""; position: absolute; left: 4px; right: 4px; bottom: 0; height: 2px; background: #7fb0d8; }
.task-on { background: #4d5a62; }

/* file menu */
.filemenu {
  position: absolute;
  left: 0;
  top: 57px;
  width: 536px;
  height: 536px;
  background: #fbfcfc;
  border: 1px solid #9ea3a5;
  box-shadow: 2px 2px 3px rgba(60, 60, 60, .65);
  padding: 2px 3px 0 4px;
}
.fm-box { display: flex; height: 494px; border: 1px solid #b9bdbf; border-radius: 1px; }
.fm-left { width: 122px; flex: none; border-right: 1px solid #b9bdbf; margin-top: -1px; }
.fm-big { height: 37px; display: flex; align-items: center; position: relative; white-space: nowrap; }
.fm-first { height: 36px; }
.fm-fourth { height: 38px; }
.fm-ic { width: 37px; flex: none; display: flex; align-items: center; justify-content: center; padding-right: 3px; }
.fm-hot { background: #cfe8fa; }
.fm-hot-end { position: absolute; right: 0; top: 0; bottom: 0; width: 18px; background: #a9d8f6; }
.fm-last { height: 42px; padding-bottom: 5px; border-bottom: 1px solid #c6cacc; }
.fm-arrow { position: absolute; right: 8px; top: 14px; width: 0; height: 0; border-top: 4px solid transparent; border-bottom: 4px solid transparent; border-left: 4px solid #555; }
.fm-hot-end .fm-arrow { right: 7px; }
.fm-small { height: 36px; display: flex; align-items: center; padding-left: 6px; position: relative; white-space: nowrap; }
.fm-small-first { margin-top: 4px; }
.fm-small-last { height: 42px; padding-bottom: 4px; border-bottom: 1px solid #c6cacc; }
.fm-low { height: 36px; }
.fm-low-first { margin-top: 3px; }
.fm-right { flex: 1; min-width: 0; }
.fm-head { height: 27px; line-height: 26px; padding-left: 3px; font-weight: 700; border-bottom: 1px solid #c6cacc; }
.fm-session { height: 21px; line-height: 30px; padding-left: 1px; color: #aeb3b6; margin-bottom: 4px; }
.recent li { height: 21px; line-height: 21px; padding: 0 7px 0 1px; display: flex; align-items: center; justify-content: space-between; white-space: nowrap; letter-spacing: .18px; }
.recent li.un { padding-left: 5px; }
.fm-foot { height: 40px; padding: 4px 7px 0 0; display: flex; align-items: center; justify-content: flex-end; gap: 1px; }

.cursor { position: absolute; left: 120px; top: 257px; }
```
